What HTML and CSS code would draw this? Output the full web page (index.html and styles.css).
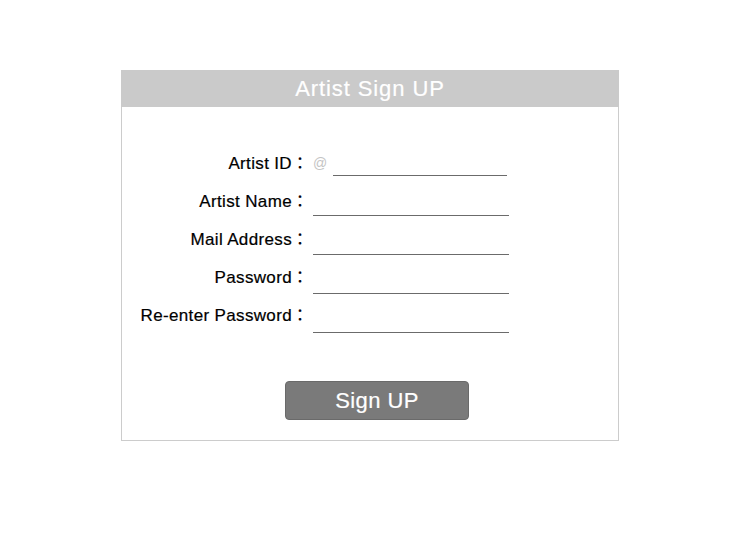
FILE: index.html
```html
<!DOCTYPE html>
<html>
<head>
<meta charset="utf-8">
<link rel="stylesheet" href="styles.css">
</head>
<body>
<div class="card">
  <div class="card-header">Artist Sign UP</div>
  <div class="form">
    <div class="labels">
      <div class="label">Artist ID<span class="colon">：</span></div>
      <div class="label">Artist Name<span class="colon">：</span></div>
      <div class="label">Mail Address<span class="colon">：</span></div>
      <div class="label">Password<span class="colon">：</span></div>
      <div class="label">Re-enter Password<span class="colon">：</span></div>
    </div>
    <div class="fields">
      <div class="field field-id"><span class="at">@</span><span class="line short"></span></div>
      <div class="field"><span class="line"></span></div>
      <div class="field"><span class="line"></span></div>
      <div class="field"><span class="line"></span></div>
      <div class="field"><span class="line"></span></div>
    </div>
  </div>
  <div class="actions">
    <button class="btn">Sign UP</button>
  </div>
</div>
</body>
</html>
```
FILE: styles.css
```css
html, body {
  margin: 0;
  padding: 0;
  background: #fff;
}
body {
  font-family: "Liberation Sans", "Noto Sans CJK JP", sans-serif;
  color: #000;
}
.card {
  margin: 70px 0 0 121px;
  width: 498px;
  box-sizing: border-box;
  border: 1px solid #cccccc;
  border-top: none;
  padding-bottom: 20px;
}
.card-header {
  margin: 0 -1px;
  height: 37px;
  background: #cacaca;
  color: #fff;
  font-size: 22px;
  letter-spacing: 0.9px;
  line-height: 37px;
  text-align: center;
  -webkit-text-stroke: 0.2px #fff;
}
.form {
  display: flex;
  gap: 5px;
}
.labels {
  width: 186px;
  margin-top: 36px;
  display: flex;
  flex-direction: column;
}
.label {
  height: 38px;
  line-height: 38px;
  font-size: 17px;
  letter-spacing: 0.35px;
  text-align: right;
  white-space: nowrap;
  -webkit-text-stroke: 0.2px #000;
}
.colon {
  display: inline-block;
  width: 16px;
  text-align: center;
  letter-spacing: 0;
  font-family: "Noto Sans CJK JP", sans-serif;
  font-size: 16px;
}
.fields {
  margin-top: 31px;
  display: flex;
  flex-direction: column;
}
.field {
  height: 39px;
  display: flex;
  align-items: flex-end;
}
.line {
  display: block;
  width: 196px;
  height: 1px;
  background: #6b6b6b;
}
.line.short {
  width: 174px;
  margin-bottom: 1px;
}
.field-id {
  align-items: flex-start;
}
.field-id .line {
  align-self: flex-end;
}
.at {
  color: #c4c4c4;
  font-size: 14px;
  line-height: 14px;
  margin-top: 18px;
  width: 20px;
}
.actions {
  margin-top: 48px;
  padding-left: 163px;
}
.btn {
  display: block;
  width: 184px;
  height: 39px;
  box-sizing: border-box;
  background: #7a7a7a;
  border: 1px solid #6a6a6a;
  border-radius: 4px;
  color: #fff;
  font-family: "Liberation Sans", "Noto Sans CJK JP", sans-serif;
  font-size: 22px;
  letter-spacing: 0.4px;
  padding: 0;
  line-height: 36px;
  -webkit-text-stroke: 0.2px #fff;
}
```
